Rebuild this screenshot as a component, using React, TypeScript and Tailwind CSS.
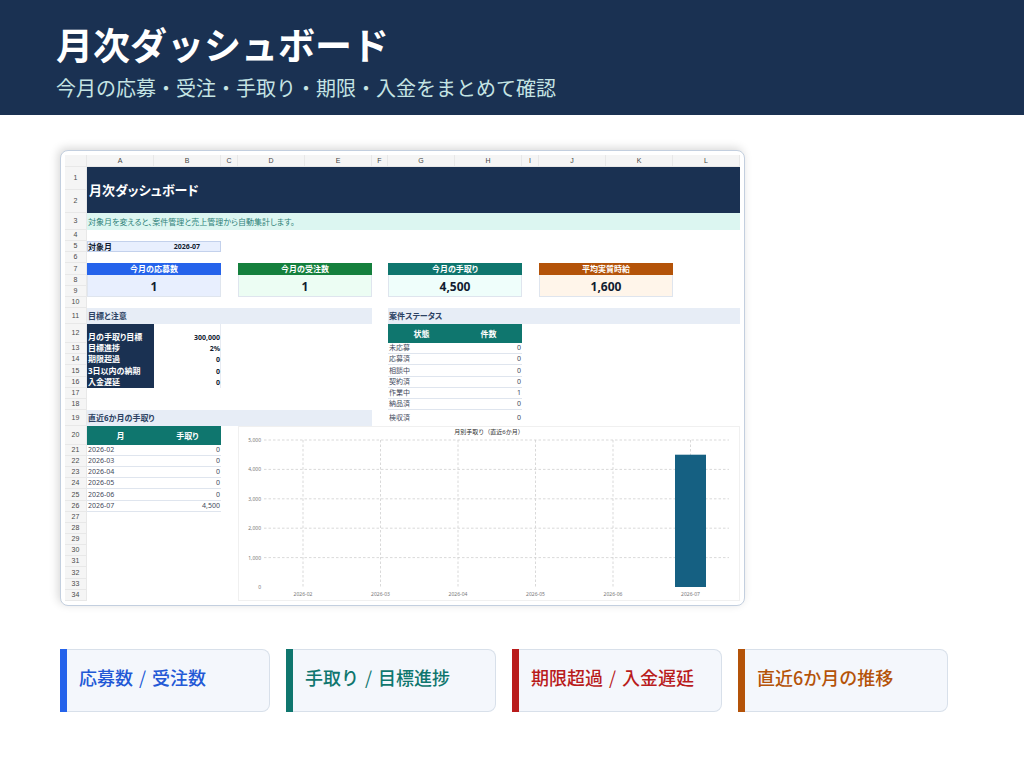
import type { ReactNode } from "react";

const columns = [
  { name: "A", width: "w-[67px]" },
  { name: "B", width: "w-[67px]" },
  { name: "C", width: "w-[17px]" },
  { name: "D", width: "w-[67px]" },
  { name: "E", width: "w-[67px]" },
  { name: "F", width: "w-[16px]" },
  { name: "G", width: "w-[67px]" },
  { name: "H", width: "w-[67px]" },
  { name: "I", width: "w-[17px]" },
  { name: "J", width: "w-[67px]" },
  { name: "K", width: "w-[67px]" },
  { name: "L", width: "w-[67px]" },
];

const kpis = [
  { label: "今月の応募数", value: "1", head: "bg-[#2563eb]", body: "bg-[#e8effe]" },
  { label: "今月の受注数", value: "1", head: "bg-[#15803d]", body: "bg-[#ecfdf3]" },
  { label: "今月の手取り", value: "4,500", head: "bg-[#0f766e]", body: "bg-[#effefb]" },
  { label: "平均実質時給", value: "1,600", head: "bg-[#b45309]", body: "bg-[#fff5ea]" },
];

const goals = [
  ["目標進捗", "2%"],
  ["期限超過", "0"],
  ["3日以内の納期", "0"],
  ["入金遅延", "0"],
];

const statuses = [
  ["未応募", "0"],
  ["応募済", "0"],
  ["相談中", "0"],
  ["契約済", "0"],
  ["作業中", "1"],
  ["納品済", "0"],
];

const months = [
  { month: "2026-02", amount: 0 },
  { month: "2026-03", amount: 0 },
  { month: "2026-04", amount: 0 },
  { month: "2026-05", amount: 0 },
  { month: "2026-06", amount: 0 },
  { month: "2026-07", amount: 4500 },
];

const features = [
  { parts: ["応募数", "受注数"], bar: "bg-[#2563eb]", text: "text-[#2359d6]" },
  { parts: ["手取り", "目標進捗"], bar: "bg-[#0f766e]", text: "text-[#0f766e]" },
  { parts: ["期限超過", "入金遅延"], bar: "bg-[#b91c1c]", text: "text-[#b91c1c]" },
  { parts: ["直近6か月の推移"], bar: "bg-[#b45309]", text: "text-[#b45309]" },
];

function Row({ n, h = "h-[11px]", children }: { n: number; h?: string; children?: ReactNode }) {
  return (
    <tr className={h}>
      <th
        scope="row"
        className="border-r border-b border-[#e8e8e8] bg-[#f5f5f5] p-0 text-center align-middle font-['Liberation_Sans',sans-serif] text-[7px] font-normal text-[#4a4a4a]"
      >
        {n}
      </th>
      {children}
    </tr>
  );
}

function SectionHead({ span, children }: { span: number; children: ReactNode }) {
  return (
    <td colSpan={span} className="bg-[#e7edf6] px-px align-middle text-[8px] font-bold text-[#2c4263]">
      {children}
    </td>
  );
}

function TableHead({ children }: { children: ReactNode }) {
  return <td className="bg-[#0f766e] text-center align-middle text-[8px] font-bold text-white">{children}</td>;
}

function GoalCells({ label, value }: { label: string; value: string }) {
  return (
    <>
      <td className="bg-[#1a3152] px-px align-bottom text-[8px] font-bold whitespace-nowrap text-white">
        <div className="pb-0.5">{label}</div>
      </td>
      <td className="border-r border-[#e7ebf2] text-right align-bottom text-[7px] font-bold">
        <div className="pb-px">{value}</div>
      </td>
    </>
  );
}

function LineCells({ label, value }: { label: string; value: string }) {
  return (
    <>
      <td className="border-b border-[#dfe5ee] px-px align-middle text-[7px] text-[#3f4a5c]">{label}</td>
      <td className="border-b border-[#dfe5ee] px-px text-right align-middle text-[7px] text-[#3f4a5c]">{value}</td>
    </>
  );
}

function Chart() {
  const top = 14;
  const bottom = 161;
  const y = (v: number) => bottom - (v / 5000) * (bottom - top);
  const x = (i: number) => 65 + i * 77.5;
  return (
    <svg
      viewBox="0 0 502 175"
      className="block w-full font-['Noto_Sans','Noto_Sans_CJK_JP',sans-serif] [font-feature-settings:normal]"
      role="img"
      aria-label="月別手取り（直近6か月）"
    >
      <rect x="0.5" y="0.5" width="501" height="174" fill="#fff" stroke="#f0f0f0" />
      <text x="251" y="8" textAnchor="middle" fontSize="6" fill="#333">
        月別手取り（直近6か月）
      </text>
      {[5000, 4000, 3000, 2000, 1000].map((v) => (
        <line key={v} x1="26" x2="491" y1={y(v)} y2={y(v)} stroke="#cfcfcf" strokeWidth="0.8" strokeDasharray="2.5 2" />
      ))}
      {months.map((m, i) => (
        <line
          key={m.month}
          x1={x(i)}
          x2={x(i)}
          y1={top}
          y2={bottom}
          stroke="#cfcfcf"
          strokeWidth="0.8"
          strokeDasharray="2.5 2"
        />
      ))}
      {[5000, 4000, 3000, 2000, 1000, 0].map((v) => (
        <text key={v} x="23" y={y(v) + 2} textAnchor="end" fontSize="5" fill="#777">
          {v.toLocaleString("en-US")}
        </text>
      ))}
      {months.map((m, i) => (
        <g key={m.month}>
          {m.amount > 0 && (
            <rect x={x(i) - 15.5} y={y(m.amount)} width="31" height={bottom - y(m.amount)} fill="#156082" />
          )}
          <text x={x(i)} y="170" textAnchor="middle" fontSize="5" fill="#777">
            {m.month}
          </text>
        </g>
      ))}
    </svg>
  );
}

function Sheet() {
  return (
    <table className="w-full table-fixed border-separate border-spacing-0 font-['Noto_Sans','Noto_Sans_CJK_JP',sans-serif] text-[7px] leading-[8px] text-[#111c30] [font-feature-settings:'palt'] [&_td]:py-0">
      <colgroup>
        <col className="w-[22px]" />
        {columns.map((c) => (
          <col key={c.name} className={c.width} />
        ))}
      </colgroup>
      <thead>
        <tr className="h-3 font-['Liberation_Sans',sans-serif] text-[#444]">
          <th className="border-r border-b border-[#e8e8e8] bg-[#f5f5f5] p-0" />
          {columns.map((c) => (
            <th key={c.name} scope="col" className="border-r border-b border-[#e8e8e8] bg-[#f5f5f5] p-0 text-center font-normal">
              {c.name}
            </th>
          ))}
        </tr>
      </thead>
      <tbody>
        <Row n={1} h="h-[23px]">
          <td colSpan={12} rowSpan={2} className="bg-[#1a3152] px-[2px] align-middle text-[13px] leading-5 font-bold text-white">
            月次ダッシュボード
          </td>
        </Row>
        <Row n={2} h="h-[23px]" />
        <Row n={3} h="h-[17px]">
          <td colSpan={12} className="bg-[#dcf6f1] px-px align-middle text-[8px] text-[#2f8279]">
            対象月を変えると、案件管理と売上管理から自動集計します。
          </td>
        </Row>
        <Row n={4} />
        <Row n={5}>
          <td className="border-y border-l border-[#c3d1ec] bg-[#e8effe] text-[8px] font-bold">対象月</td>
          <td className="border-y border-r border-[#c3d1ec] bg-[#e8effe] text-center font-bold">2026-07</td>
        </Row>
        <Row n={6} />
        <Row n={7} h="h-3">
          {kpis.map((k, i) => [
            i > 0 && <td key={`gap-${k.label}`} />,
            <td key={k.label} colSpan={2} className={`text-center align-middle text-[8px] font-bold text-white ${k.head}`}>
              {k.label}
            </td>,
          ])}
        </Row>
        <Row n={8}>
          {kpis.map((k, i) => [
            i > 0 && <td key={`gap-${k.label}`} rowSpan={2} />,
            <td
              key={k.label}
              colSpan={2}
              rowSpan={2}
              className={`border-x border-b border-[#dfe5ee] text-center align-middle text-[12px] font-bold ${k.body}`}
            >
              <div className="pt-0.5 leading-4">{k.value}</div>
            </td>,
          ])}
        </Row>
        <Row n={9} />
        <Row n={10} />
        <Row n={11} h="h-4">
          <SectionHead span={5}>目標と注意</SectionHead>
          <td />
          <SectionHead span={6}>案件ステータス</SectionHead>
        </Row>
        <Row n={12} h="h-[19px]">
          <GoalCells label="月の手取り目標" value="300,000" />
          <td colSpan={4} />
          <TableHead>状態</TableHead>
          <TableHead>件数</TableHead>
        </Row>
        {statuses.map(([status, count], i) => (
          <Row key={status} n={13 + i} h={i === 2 ? "h-3" : "h-[11px]"}>
            {i < goals.length ? <GoalCells label={goals[i][0]} value={goals[i][1]} /> : <td colSpan={2} />}
            <td colSpan={4} />
            <LineCells label={status} value={count} />
          </Row>
        ))}
        <Row n={19} h="h-4">
          <SectionHead span={5}>直近6か月の手取り</SectionHead>
          <td />
          <td className="px-px align-middle text-[#3f4a5c]">検収済</td>
          <td className="px-px text-right align-middle text-[#3f4a5c]">0</td>
        </Row>
        <Row n={20} h="h-[19px]">
          <TableHead>月</TableHead>
          <TableHead>手取り</TableHead>
          <td rowSpan={15} />
          <td colSpan={9} rowSpan={15} className="p-0 align-top">
            <Chart />
          </td>
        </Row>
        {months.map((m, i) => (
          <Row key={m.month} n={21 + i} h={i === 4 ? "h-3" : "h-[11px]"}>
            <LineCells label={m.month} value={m.amount.toLocaleString("en-US")} />
          </Row>
        ))}
        {[27, 28, 29, 30, 31, 32, 33, 34].map((n) => (
          <Row key={n} n={n} h={n === 32 ? "h-3" : "h-[11px]"}>
            <td colSpan={2} />
          </Row>
        ))}
      </tbody>
    </table>
  );
}

export default function App() {
  return (
    <div className="min-h-screen bg-white font-['Noto_Sans_CJK_JP',sans-serif]" lang="ja">
      <header className="bg-[#1a3152] px-14 pt-[18px] pb-3">
        <h1 className="text-[37px] leading-[52px] font-bold text-white">月次ダッシュボード</h1>
        <p className="mt-[3px] text-[20px] leading-[30px] text-[#c5e4e4]">
          今月の応募・受注・手取り・期限・入金をまとめて確認
        </p>
      </header>
      <main className="px-15 pt-[35px] pb-14">
        <section className="max-w-[685px] rounded-lg border border-[#c3cfdf] bg-white p-1 shadow-[-2px_-2px_10px_rgba(0,0,0,0.16)]">
          <Sheet />
        </section>
        <ul className="mt-[43px] grid max-w-[888px] grid-cols-4 gap-4">
          {features.map((f) => (
            <li key={f.bar} className="flex h-[63px]">
              <span className={`w-[7px] shrink-0 ${f.bar}`} />
              <p
                className={`flex flex-1 items-center rounded-r-lg border border-l-0 border-[#d8e0ea] bg-[#f4f7fc] pb-2 pl-3 text-[18px] leading-6 font-medium whitespace-nowrap ${f.text}`}
              >
                {f.parts.map((part, i) => [
                  i > 0 && (
                    <span key="slash" className="px-1.5 font-normal">
                      /
                    </span>
                  ),
                  part,
                ])}
              </p>
            </li>
          ))}
        </ul>
      </main>
    </div>
  );
}
